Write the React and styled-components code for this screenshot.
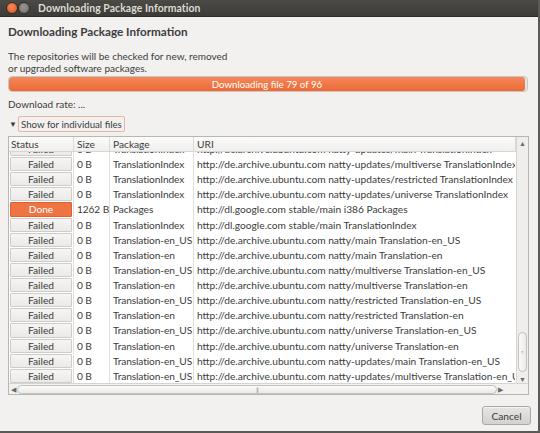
import React from "react"
import styled, { createGlobalStyle } from "styled-components"

const Global = createGlobalStyle`
  html, body {
    margin: 0;
    padding: 0;
    background: #f2f1f0;
  }
  * { box-sizing: border-box; }
`

const Window = styled.div`
  width: 540px;
  height: 433px;
  display: flex;
  flex-direction: column;
  background: #f2f1f0;
  border-right: 2px solid #5a5955;
  border-bottom: 2px solid #5a5955;
  font-family: Lato, 'Open Sans', sans-serif;
  color: #3c3c3c;
  overflow: hidden;
`

const TitleBar = styled.div`
  height: 17px;
  flex-shrink: 0;
  display: flex;
  align-items: center;
  padding-left: 6px;
  background: linear-gradient(#4b4a46, #3c3b37);
  border-bottom: 1px solid #2b2a27;
`
const WinButton = styled.div`
  width: 12px;
  height: 12px;
  border-radius: 50%;
  background: ${p => p.close ? "radial-gradient(circle at 45% 40%, #f58d5f, #dd4814)" : "radial-gradient(circle at 45% 40%, #9a9994, #6b6a66)"};
  border: 1px solid #2e2d2a;
`
const TitleText = styled.div`
  margin-left: 8px;
  font-size: 10.4px;
  font-weight: 700;
  color: #dfdbd2;
  letter-spacing: 0.1px;
`

const Content = styled.div`
  flex: 1;
  display: flex;
  flex-direction: column;
  padding: 5px 7px 0 8px;
`
const Heading = styled.div`
  font-size: 11.7px;
  font-weight: 700;
  color: #3c3c3c;
  line-height: 18px;
  margin-bottom: 10px;
`
const Para = styled.div`
  font-size: 10px;
  line-height: 12px;
  margin-bottom: 2px;
`
const Progress = styled.div`
  width: 520px;
  height: 16px;
  border-radius: 4px;
  background: #e6e5e3;
  border: 1px solid #c9c7c3;
  overflow: hidden;
`
const ProgressFill = styled.div`
  height: 100%;
  border-radius: 3px;
  background: linear-gradient(#f4875a, #ec6a36);
  display: flex;
  align-items: center;
  justify-content: center;
  color: #fff;
  font-size: 9.7px;
`
const Rate = styled.div`
  font-size: 10px;
  line-height: 14px;
  margin-top: 5px;
`
const Expander = styled.div`
  display: flex;
  align-items: center;
  height: 16px;
  margin-top: 5px;
  margin-bottom: 4px;
`
const Arrow = styled.span`
  font-size: 8px;
  width: 10px;
  padding-left: 1px;
  color: #3c3c3c;
`
const ExpanderLabel = styled.span`
  font-size: 9.7px;
  line-height: 14px;
  padding: 0 2px;
  border: 1px solid #e3b9a2;
  border-radius: 2px;
`

const Frame = styled.div`
  width: 521px;
  border: 1px solid #b8b6b2;
  background: #fff;
  display: flex;
  flex-direction: column;
`
const TableArea = styled.div`
  display: flex;
  height: 246px;
`
const Table = styled.div`
  flex: 1;
  min-width: 0;
  display: flex;
  flex-direction: column;
  overflow: hidden;
`
const cols = "65px 36px 84px 1fr"
const HeaderRow = styled.div`
  display: grid;
  grid-template-columns: ${cols};
  height: 15px;
  flex-shrink: 0;
  background: linear-gradient(#fbfbfa, #f0efed);
  border-bottom: 1px solid #d8d6d2;
  position: relative;
  z-index: 1;
`
const HeaderCell = styled.div`
  font-size: 10.2px;
  line-height: 14px;
  padding-left: ${p => p.pad || 3}px;
  border-right: 1px solid #dddbd8;
  white-space: nowrap;
`
const Body = styled.div`
  flex: 1;
  overflow: hidden;
`
const Rows = styled.div`
  margin-top: -10.6px;
`
const Row = styled.div`
  display: grid;
  grid-template-columns: ${cols};
  height: 15.13px;
  align-items: stretch;
`
const StatusCell = styled.div`
  padding: 0.5px 1px;
  border-right: 1px solid #e2e0dd;
`
const StatusBox = styled.div`
  height: 100%;
  display: flex;
  align-items: center;
  justify-content: center;
  font-size: 10.2px;
  color: ${p => p.done ? "#fff" : "#3c3c3c"};
  background: ${p => p.done ? "#ef7443" : "linear-gradient(#f6f5f4, #ebeae8)"};
  border: 1px solid ${p => p.done ? "#e0602e" : "#cfcdc9"};
  border-radius: 1px;
`
const Cell = styled.div`
  font-size: 10.2px;
  letter-spacing: ${p => p.last ? 0 : -0.12}px;
  display: flex;
  align-items: center;
  padding-left: 3px;
  border-right: 1px solid ${p => p.last ? "transparent" : "#e2e0dd"};
  white-space: nowrap;
  overflow: hidden;
`

const VScroll = styled.div`
  width: 12px;
  flex-shrink: 0;
  background: #efeeec;
  border-left: 1px solid #d6d4d0;
  display: flex;
  flex-direction: column;
  align-items: center;
  padding-top: 2px;
`
const ScrollArrow = styled.div`
  font-size: 7px;
  line-height: 8px;
  color: #6a6966;
`
const VTrack = styled.div`
  flex: 1;
  width: 100%;
  display: flex;
  flex-direction: column;
  justify-content: flex-end;
  padding: 0 1px 3px;
`
const VThumb = styled.div`
  height: 40px;
  border: 1px solid #c3c1bd;
  border-radius: 5px;
  background: linear-gradient(90deg, #fafaf9, #eceae8);
  display: flex;
  align-items: center;
  justify-content: center;
  font-size: 5px;
  color: #9a9894;
`
const HScrollRow = styled.div`
  display: flex;
  height: 11px;
  background: #f2f1f0;
  border-top: 1px solid #d6d4d0;
`
const HScroll = styled.div`
  width: 496px;
  display: flex;
  align-items: center;
  padding: 0 2px;
  gap: 1px;
`
const HThumb = styled.div`
  flex: 1;
  height: 9px;
  border: 1px solid #c3c1bd;
  border-radius: 5px;
  background: linear-gradient(#fafaf9, #eceae8);
  display: flex;
  align-items: center;
  justify-content: center;
  font-size: 6px;
  color: #9a9894;
  letter-spacing: -1px;
`

const Footer = styled.div`
  flex: 1;
  display: flex;
  justify-content: flex-end;
  align-items: flex-start;
  padding-top: 11px;
`
const Button = styled.button`
  width: 49px;
  height: 19px;
  font-family: inherit;
  font-size: 10.2px;
  color: #3c3c3c;
  border: 1px solid #a9a7a3;
  border-radius: 3px;
  background: linear-gradient(#e6e5e3, #d4d2ce);
  box-shadow: inset 0 1px 0 #f4f3f1;
  padding: 0;
`

const uri = "http://de.archive.ubuntu.com "
const rows = [
  ["Failed", "0 B", "TranslationIndex", uri + "natty-updates/main TranslationIndex"],
  ["Failed", "0 B", "TranslationIndex", uri + "natty-updates/multiverse TranslationIndex"],
  ["Failed", "0 B", "TranslationIndex", uri + "natty-updates/restricted TranslationIndex"],
  ["Failed", "0 B", "TranslationIndex", uri + "natty-updates/universe TranslationIndex"],
  ["Done", "1262 B", "Packages", "http://dl.google.com stable/main i386 Packages"],
  ["Failed", "0 B", "TranslationIndex", "http://dl.google.com stable/main TranslationIndex"],
  ["Failed", "0 B", "Translation-en_US", uri + "natty/main Translation-en_US"],
  ["Failed", "0 B", "Translation-en", uri + "natty/main Translation-en"],
  ["Failed", "0 B", "Translation-en_US", uri + "natty/multiverse Translation-en_US"],
  ["Failed", "0 B", "Translation-en", uri + "natty/multiverse Translation-en"],
  ["Failed", "0 B", "Translation-en_US", uri + "natty/restricted Translation-en_US"],
  ["Failed", "0 B", "Translation-en", uri + "natty/restricted Translation-en"],
  ["Failed", "0 B", "Translation-en_US", uri + "natty/universe Translation-en_US"],
  ["Failed", "0 B", "Translation-en", uri + "natty/universe Translation-en"],
  ["Failed", "0 B", "Translation-en_US", uri + "natty-updates/main Translation-en_US"],
  ["Failed", "0 B", "Translation-en_US", uri + "natty-updates/multiverse Translation-en_US"],
]

const App = () => {
  return (
    <Window>
      <Global />
      <TitleBar>
        <WinButton close />
        <WinButton />
        <TitleText>Downloading Package Information</TitleText>
      </TitleBar>
      <Content>
        <Heading>Downloading Package Information</Heading>
        <Para>
          The repositories will be checked for new, removed<br />
          or upgraded software packages.
        </Para>
        <Progress>
          <ProgressFill style={{ width: "99.6%" }}>Downloading file 79 of 96</ProgressFill>
        </Progress>
        <Rate>Download rate: ...</Rate>
        <Expander>
          <Arrow>▼</Arrow>
          <ExpanderLabel>Show for individual files</ExpanderLabel>
        </Expander>
        <Frame>
          <TableArea>
            <Table>
              <HeaderRow>
                <HeaderCell pad={2}>Status</HeaderCell>
                <HeaderCell>Size</HeaderCell>
                <HeaderCell>Package</HeaderCell>
                <HeaderCell>URI</HeaderCell>
              </HeaderRow>
              <Body>
                <Rows>
                  {rows.map((r, i) => (
                    <Row key={i}>
                      <StatusCell>
                        <StatusBox done={r[0] === "Done"}>{r[0]}</StatusBox>
                      </StatusCell>
                      <Cell>{r[1]}</Cell>
                      <Cell>{r[2]}</Cell>
                      <Cell last>{r[3]}</Cell>
                    </Row>
                  ))}
                </Rows>
              </Body>
            </Table>
            <VScroll>
              <ScrollArrow>▲</ScrollArrow>
              <VTrack>
                <VThumb>≡</VThumb>
              </VTrack>
              <ScrollArrow>▼</ScrollArrow>
            </VScroll>
          </TableArea>
          <HScrollRow>
            <HScroll>
              <ScrollArrow>◀</ScrollArrow>
              <HThumb>|||</HThumb>
              <ScrollArrow>▶</ScrollArrow>
            </HScroll>
          </HScrollRow>
        </Frame>
        <Footer>
          <Button>Cancel</Button>
        </Footer>
      </Content>
    </Window>
  )
}

export default App
